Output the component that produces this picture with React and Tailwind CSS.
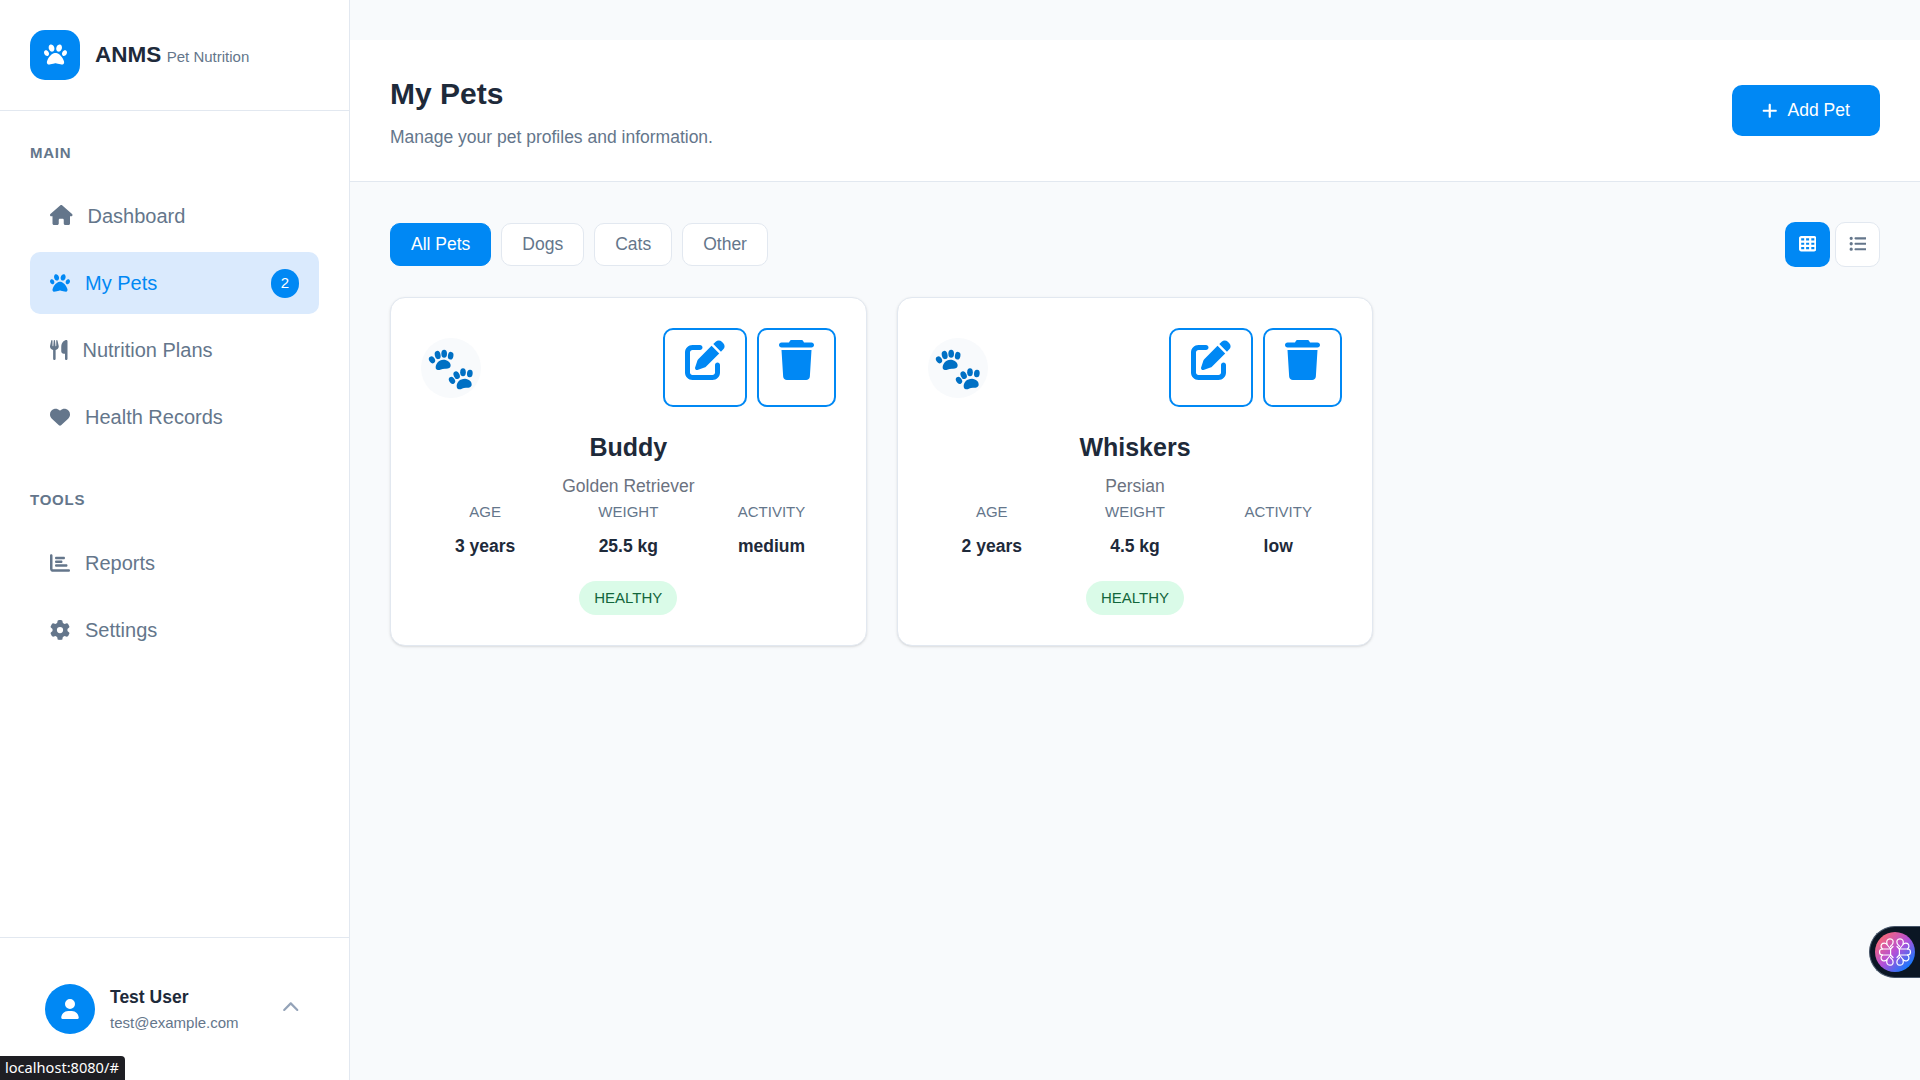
import React from "react";
import {
  FaPaw, FaHouse, FaUtensils, FaHeart, FaChartBar, FaGear, FaUser,
  FaChevronUp, FaPlus, FaTableCells, FaListUl, FaPenToSquare, FaTrash,
} from "react-icons/fa6";

const mainNav = [
  { label: "Dashboard", Icon: FaHouse, size: "w-[22.5px] mb-[2px]" },
  { label: "My Pets", Icon: FaPaw, size: "w-[20px]", badge: "2", active: true },
  { label: "Nutrition Plans", Icon: FaUtensils, size: "w-[17.5px]" },
  { label: "Health Records", Icon: FaHeart, size: "w-[20px] mb-[1px]" },
];
const toolNav = [
  { label: "Reports", Icon: FaChartBar, size: "w-[20px] mb-[1px]" },
  { label: "Settings", Icon: FaGear, size: "w-[20px] mb-[1px]" },
];
const pets = [
  { name: "Buddy", breed: "Golden Retriever", stats: [["AGE", "3 years"], ["WEIGHT", "25.5 kg"], ["ACTIVITY", "medium"]] },
  { name: "Whiskers", breed: "Persian", stats: [["AGE", "2 years"], ["WEIGHT", "4.5 kg"], ["ACTIVITY", "low"]] },
];

function NavSection({ title, items }) {
  return (
    <section>
      <h2 className="mb-[20px] text-[15px] font-bold leading-[24px] tracking-[0.75px] text-[#64768b]">{title}</h2>
      <ul className="flex flex-col gap-[5px]">
        {items.map(({ label, Icon, size, badge, active }) => (
          <li
            key={label}
            className={`flex h-[62px] items-center gap-[15px] rounded-[10px] px-[20px] text-[20px] ${active ? "bg-[#daeafd] text-[#0088f4]" : "text-[#64768b]"}`}
          >
            <Icon className={`h-[20px] shrink-0 ${size}`} />
            <span>{label}</span>
            {badge && (
              <span className="ml-auto flex h-[29px] w-[28px] items-center justify-center rounded-full bg-[#0088f4] text-[15px] text-white">
                {badge}
              </span>
            )}
          </li>
        ))}
      </ul>
    </section>
  );
}

function Sidebar() {
  return (
    <aside className="flex w-[350px] shrink-0 flex-col border-r border-[#e2e8f0] bg-white">
      <div className="flex h-[111px] items-center gap-[15px] border-b border-[#e2e8f0] px-[30px]">
        <div className="flex size-[50px] items-center justify-center rounded-[15px] bg-[#0088f4] text-white">
          <FaPaw className="mb-[1px] size-[23px]" />
        </div>
        <div className="flex items-baseline gap-[5.5px]">
          <span className="text-[22.5px] font-bold text-[#1e2a3a]">ANMS</span>
          <span className="text-[15px] text-[#64768b]">Pet Nutrition</span>
        </div>
      </div>
      <nav className="flex flex-1 flex-col gap-[40px] px-[30px] pt-[30px]">
        <NavSection title="MAIN" items={mainNav} />
        <NavSection title="TOOLS" items={toolNav} />
      </nav>
      <div className="flex h-[143px] items-center gap-[15px] border-t border-[#e2e8f0] pl-[45px] pr-[50px]">
        <div className="flex size-[50px] items-center justify-center rounded-full bg-[#0088f4] text-white">
          <FaUser className="size-[20px]" />
        </div>
        <div>
          <div className="pt-[1px] text-[17.5px] font-bold leading-[26px] text-[#1e2a3a]">Test User</div>
          <div className="text-[15px] leading-[25px] text-[#64768b]">test@example.com</div>
        </div>
        <FaChevronUp className="mb-[3px] ml-auto size-[17.5px] text-[#94a3b8]" />
      </div>
    </aside>
  );
}

function PawPrints() {
  return (
    <svg viewBox="9 9 180 180" className="size-[60px]" fill="#0070c4">
      <ellipse cx="42" cy="74.5" rx="8.5" ry="11" transform="rotate(-32 42 74.5)" />
      <ellipse cx="59" cy="60" rx="8.7" ry="12.5" transform="rotate(-12 59 60)" />
      <ellipse cx="78.5" cy="56.5" rx="8.5" ry="12" />
      <ellipse cx="98" cy="62" rx="8.3" ry="11.5" transform="rotate(10 98 62)" />
      <path d="M53 97C53 86 62 74 76 74C88 74 98 82 98 91C98 99 92 101 84 101C70 100 66 106 59 105C54 104 53 101 53 97Z" />
      <ellipse cx="102" cy="136" rx="8.3" ry="11.3" transform="rotate(-34 102 136)" />
      <ellipse cx="116" cy="120.5" rx="8.8" ry="12" transform="rotate(-25 116 120.5)" />
      <ellipse cx="135" cy="112" rx="8.5" ry="12" />
      <ellipse cx="155.5" cy="115.5" rx="8.5" ry="11.3" transform="rotate(5 155.5 115.5)" />
      <path d="M116 153C116 142 125 131 141 131C153 132 162 140 161 149C160 157 154 158 146 158C135 157 130 164 123 163C118 162 116 158 116 153Z" />
    </svg>
  );
}

function PetCard({ pet }) {
  return (
    <article className="h-[349px] rounded-[15px] border border-[#e2e8f0] bg-white px-[30px] pt-[30px] text-center shadow-sm">
      <div className="flex h-[79px] items-center justify-between">
        <div className="flex size-[60px] items-center justify-center rounded-full bg-[#f8fafc]">
          <PawPrints />
        </div>
        <div className="flex gap-[10px] text-[#0088f4]">
          <button className="flex h-[79px] items-start rounded-[10px] border-2 border-[#0088f4] px-[20px] pt-[10px]">
            <FaPenToSquare className="size-[40px]" />
          </button>
          <button className="flex h-[79px] items-start rounded-[10px] border-2 border-[#0088f4] px-[20px] pt-[10px]">
            <FaTrash className="h-[40px] w-[35px]" />
          </button>
        </div>
      </div>
      <h3 className="mt-[20px] text-[25px] font-bold leading-[40px] text-[#1e2a3a]">{pet.name}</h3>
      <p className="mt-[5px] text-[17.5px] leading-[28px] text-[#6b7280]">{pet.breed}</p>
      <dl className="grid grid-cols-3 gap-[15px]">
        {pet.stats.map(([label, value]) => (
          <div key={label}>
            <dt className="text-[15px] leading-[24px] text-[#64768b]">{label}</dt>
            <dd className="mt-[8px] text-[17.5px] font-bold leading-[28px] text-[#1e2a3a]">{value}</dd>
          </div>
        ))}
      </dl>
      <span className="mt-[21px] inline-flex h-[34px] items-center rounded-full bg-[#dafbe8] px-[15px] text-[15px] text-[#12663c]">HEALTHY</span>
    </article>
  );
}

function BlossomHalf() {
  return (
    <>
      <path d="M15.600 17H7.500a3 3 0 0 0 0 6h8.100z" />
      <path d="M7.500 17C5.500 15.500 5.500 12.500 7.800 11.400C10.200 10.400 12 12 12.800 13.500L15.600 17" />
      <path d="M7.500 23C5.500 24.500 5.500 27.500 7.800 28.600C10.200 29.600 12 28 12.800 26.500L15.600 23" />
      <path d="M12 12C11 9 12.500 6.800 15 6.800C17.800 6.800 18.700 9.300 17.800 11.500C17.300 12.800 16 13.300 15.500 14.500" />
      <path d="M12 28C11 31 12.500 33.200 15 33.200C17.800 33.200 18.700 30.700 17.800 28.500C17.300 27.200 16 26.700 15.500 25.500" />
      <path d="M15.600 17L18 14.500M15.600 23L18 25.500" />
    </>
  );
}

function AssistantTab() {
  return (
    <div className="absolute right-0 top-[926px] flex h-[52px] w-[51px] items-center rounded-l-full border border-r-0 border-[#475569] bg-[#0b1624] pl-[5px]">
      <div className="flex size-[40px] shrink-0 items-center justify-center rounded-full bg-[linear-gradient(135deg,#ff6b6b_8%,#b44fd8_50%,#0a7cff_88%)]">
        <svg viewBox="0 0 40 40" className="size-[40px]" fill="none" stroke="#fff" strokeWidth="1.2" strokeLinejoin="round" strokeLinecap="round">
          <BlossomHalf />
          <g transform="translate(40 0) scale(-1 1)">
            <BlossomHalf />
          </g>
        </svg>
      </div>
    </div>
  );
}

export default function App() {
  return (
    <div className="relative flex h-[1080px] w-[1920px] overflow-hidden bg-[#f8fafc] font-['Liberation_Sans',Arial,sans-serif]">
      <Sidebar />
      <main className="flex-1 pt-[40px]">
        <header className="flex h-[142px] items-center justify-between border-b border-[#e2e8f0] bg-white px-[40px]">
          <div>
            <h1 className="text-[30px] font-bold leading-[48px] text-[#1e2a3a]">My Pets</h1>
            <p className="mt-[5px] text-[17.5px] leading-[28px] text-[#64768b]">Manage your pet profiles and information.</p>
          </div>
          <button className="flex h-[51px] w-[148px] items-center justify-center gap-[10px] rounded-[10px] bg-[#0088f4] text-[17.5px] text-white">
            <FaPlus className="h-[17.5px] w-[15.5px]" />
            Add Pet
          </button>
        </header>
        <div className="px-[40px] pt-[40px]">
          <div className="flex items-center justify-between">
            <div className="flex gap-[10px] text-[17.5px] text-[#64768b]">
              <button className="h-[43px] rounded-[10px] border border-[#0088f4] bg-[#0088f4] px-[20px] text-white">All Pets</button>
              {["Dogs", "Cats", "Other"].map((f) => (
                <button key={f} className="h-[43px] rounded-[10px] border border-[#e2e8f0] bg-white px-[20px]">{f}</button>
              ))}
            </div>
            <div className="flex gap-[5px]">
              <button className="flex size-[45px] items-center justify-center rounded-[10px] bg-[#0088f4] pb-[1px] text-white">
                <FaTableCells className="size-[17.5px]" />
              </button>
              <button className="flex size-[45px] items-center justify-center rounded-[10px] border border-[#e2e8f0] bg-white pb-[1px] text-[#64768b]">
                <FaListUl className="size-[17.5px]" />
              </button>
            </div>
          </div>
          <div className="mt-[30px] grid grid-cols-3 gap-[30px]">
            {pets.map((p) => <PetCard key={p.name} pet={p} />)}
          </div>
        </div>
      </main>
      <AssistantTab />
      <div className="absolute bottom-0 left-0 flex h-[24px] w-[125px] items-center rounded-tr-[4px] bg-[#1e1e23] pl-[5px] font-['Noto_Sans',sans-serif] text-[14.6px] text-white">
        localhost:8080/#
      </div>
    </div>
  );
}
